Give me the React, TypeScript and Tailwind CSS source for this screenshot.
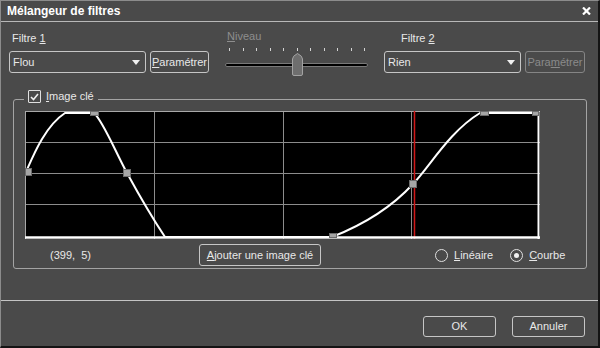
import React from "react";

const ComboArrow = () => (
  <svg width="8" height="5" viewBox="0 0 8 5" className="block">
    <path d="M0 0 H8 L4 5 Z" fill="#f0f0f0" />
  </svg>
);

function Combo({ value }: { value: string }) {
  return (
    <div className="w-[137px] h-[22px] flex items-center justify-between pl-[3px] pr-[5px] border border-[#c6c6c6] rounded-[3px]">
      <span>{value}</span>
      <ComboArrow />
    </div>
  );
}

function Radio({ checked }: { checked?: boolean }) {
  return (
    <div className="w-[13px] h-[13px] rounded-full border border-[#e0e0e0] flex items-center justify-center">
      {checked && <div className="w-[5px] h-[5px] rounded-full bg-[#f0f0f0]" />}
    </div>
  );
}

function Chart() {
  const grid = "#8c8c8c";
  const pts: [number, number, number, number][] = [
    [0, 57, 6, 7],
    [65, 0, 8, 4],
    [98, 58, 7, 7],
    [304, 122, 7, 4],
    [384, 69, 7, 7],
    [455, 0, 8, 4],
    [507, 0, 6, 4],
  ];
  return (
    <div className="w-[515px] h-[128px] bg-black">
      <svg width="515" height="128" viewBox="0 0 515 128" className="block">
        {[129.5, 258.5, 386.5].map((x) => (
          <line key={x} x1={x} y1="0" x2={x} y2="128" stroke={grid} strokeWidth="1" />
        ))}
        {[31.5, 62.5, 93.5].map((y) => (
          <line key={y} x1="0" y1={y} x2="515" y2={y} stroke={grid} strokeWidth="1" />
        ))}
        <line x1="0" y1="0.5" x2="515" y2="0.5" stroke="#a8a8a8" />
        <line x1="0.5" y1="0" x2="0.5" y2="128" stroke="#a8a8a8" />
        <line x1="389.5" y1="0" x2="389.5" y2="128" stroke="#d01818" strokeWidth="1.5" />
        <path
          d="M1,61 C8,45 20,15 40,2 L69,2 C78,10 90,40 102,62 C114,84 128,108 140,126 L307,126 C335,115 365,98 388,73 C405,55 425,20 455,2 L511,2"
          fill="none"
          stroke="#ffffff"
          strokeWidth="2"
        />
        <line x1="0" y1="126.5" x2="515" y2="126.5" stroke="#ffffff" strokeWidth="2.5" />
        <line x1="513.5" y1="0" x2="513.5" y2="128" stroke="#ffffff" strokeWidth="2" />
        {pts.map(([x, y, w, h], i) => (
          <rect key={i} x={x + 0.5} y={y + 0.5} width={w} height={h} fill="#a6a6a6" stroke="#6c6c6c" strokeWidth="1" />
        ))}
      </svg>
    </div>
  );
}

export default function App() {
  return (
    <div className="w-[600px] h-[348px] flex flex-col bg-[#4a4a4a] border-l border-t border-[#8c8c8c] border-r-2 border-b-2 border-r-[#141414] border-b-[#141414] text-[11px] leading-[13px] text-[#e8e8e8] font-['Liberation_Sans',Arial,sans-serif]">
      {/* Barre de titre */}
      <div className="h-[21px] shrink-0 flex items-center justify-between pl-[6px] pr-[7px] border-b border-[#b8b8b8]">
        <span className="text-[12px] font-bold text-white">Mélangeur de filtres</span>
        <svg width="9" height="8" viewBox="0 0 9 8" className="block">
          <path d="M1 0.5 L8 7.5 M8 0.5 L1 7.5" stroke="#ffffff" strokeWidth="2.2" />
        </svg>
      </div>

      {/* Contenu */}
      <div className="h-[279px] shrink-0 pl-[8px] pt-[10px] border-b border-[#c4c4c4]">
        <div className="flex items-start h-[41px]">
          {/* Filtre 1 */}
          <div className="w-[200px]">
            <div className="pl-[3px] h-[13px]">
              Filtre <span className="underline">1</span>
            </div>
            <div className="mt-[6px] flex gap-[4px]">
              <Combo value="Flou" />
              <div className="w-[59px] h-[22px] flex items-center justify-center border border-[#c6c6c6] rounded-[3px]">
                <span>
                  <span className="underline">P</span>aramétrer
                </span>
              </div>
            </div>
          </div>

          {/* Niveau */}
          <div className="ml-[16px] w-[143px] -mt-[2px]">
            <div className="pl-[2px] h-[13px] text-[#8e8e8e]">
              <span className="underline">N</span>iveau
            </div>
            <div className="mt-[5px] h-[3px] flex justify-between pl-[4px] pr-[3px]">
              {Array.from({ length: 11 }).map((_, i) => (
                <div key={i} className="w-[1px] h-[3px] bg-[#d4d4d4]" />
              ))}
            </div>
            <div className="relative mt-[2px] h-[23px] pt-[10px]">
              <div className="h-[4px] rounded-full bg-black border border-[#7a7a7a]" />
              <svg width="11" height="23" viewBox="0 0 11 23" className="absolute left-[67px] top-0 block">
                <path d="M0.5 6 Q0.5 3 5.5 0.5 Q10.5 3 10.5 6 L10.5 21 Q10.5 22.5 9 22.5 L2 22.5 Q0.5 22.5 0.5 21 Z" fill="#6e6e6e" stroke="#a2a2a2" />
              </svg>
            </div>
          </div>

          {/* Filtre 2 */}
          <div className="ml-[16px] w-[201px]">
            <div className="pl-[17px] h-[13px]">
              Filtre <span className="underline">2</span>
            </div>
            <div className="mt-[6px] flex gap-[4px]">
              <Combo value="Rien" />
              <div className="w-[60px] h-[22px] flex items-center justify-center border border-[#858585] rounded-[3px] text-[#8a8a8a]">
                <span>
                  Para<span className="underline">m</span>étrer
                </span>
              </div>
            </div>
          </div>
        </div>

        {/* Image clé */}
        <div className="relative mt-[26px] ml-[4px] w-[574px] h-[170px] border border-[#a4a4a4] rounded-[3px] pl-[11px] pt-[11px]">
          <div className="absolute left-[10px] -top-[10px] px-[4px] bg-[#4a4a4a] flex items-center gap-[5px]">
            <div className="w-[13px] h-[13px] border border-[#e0e0e0] rounded-[1px] flex items-center justify-center">
              <svg width="9" height="8" viewBox="0 0 9 8" className="block">
                <path d="M1 4 L3.5 6.5 L8 1" fill="none" stroke="#f0f0f0" strokeWidth="1.6" />
              </svg>
            </div>
            <span>
              <span className="underline">I</span>mage clé
            </span>
          </div>

          <Chart />

          <div className="mt-[5px] h-[22px] flex items-center">
            <span className="ml-[25px] w-[149px] whitespace-pre">(399,  5)</span>
            <div className="w-[122px] h-[22px] flex items-center justify-center border border-[#c6c6c6] rounded-[3px]">
              <span>
                <span className="underline">A</span>jouter une image clé
              </span>
            </div>
            <div className="ml-[114px] flex items-center gap-[6px]">
              <Radio />
              <span>
                <span className="underline">L</span>inéaire
              </span>
            </div>
            <div className="ml-[17px] flex items-center gap-[6px]">
              <Radio checked />
              <span>
                <span className="underline">C</span>ourbe
              </span>
            </div>
          </div>
        </div>
      </div>

      {/* Boutons */}
      <div className="flex-1 flex justify-end items-start pt-[15px] pr-[13px] gap-[16px]">
        <div className="w-[73px] h-[21px] flex items-center justify-center border border-[#c6c6c6] rounded-[3px]">
          OK
        </div>
        <div className="w-[73px] h-[21px] flex items-center justify-center border border-[#c6c6c6] rounded-[3px]">
          Annuler
        </div>
      </div>
    </div>
  );
}
